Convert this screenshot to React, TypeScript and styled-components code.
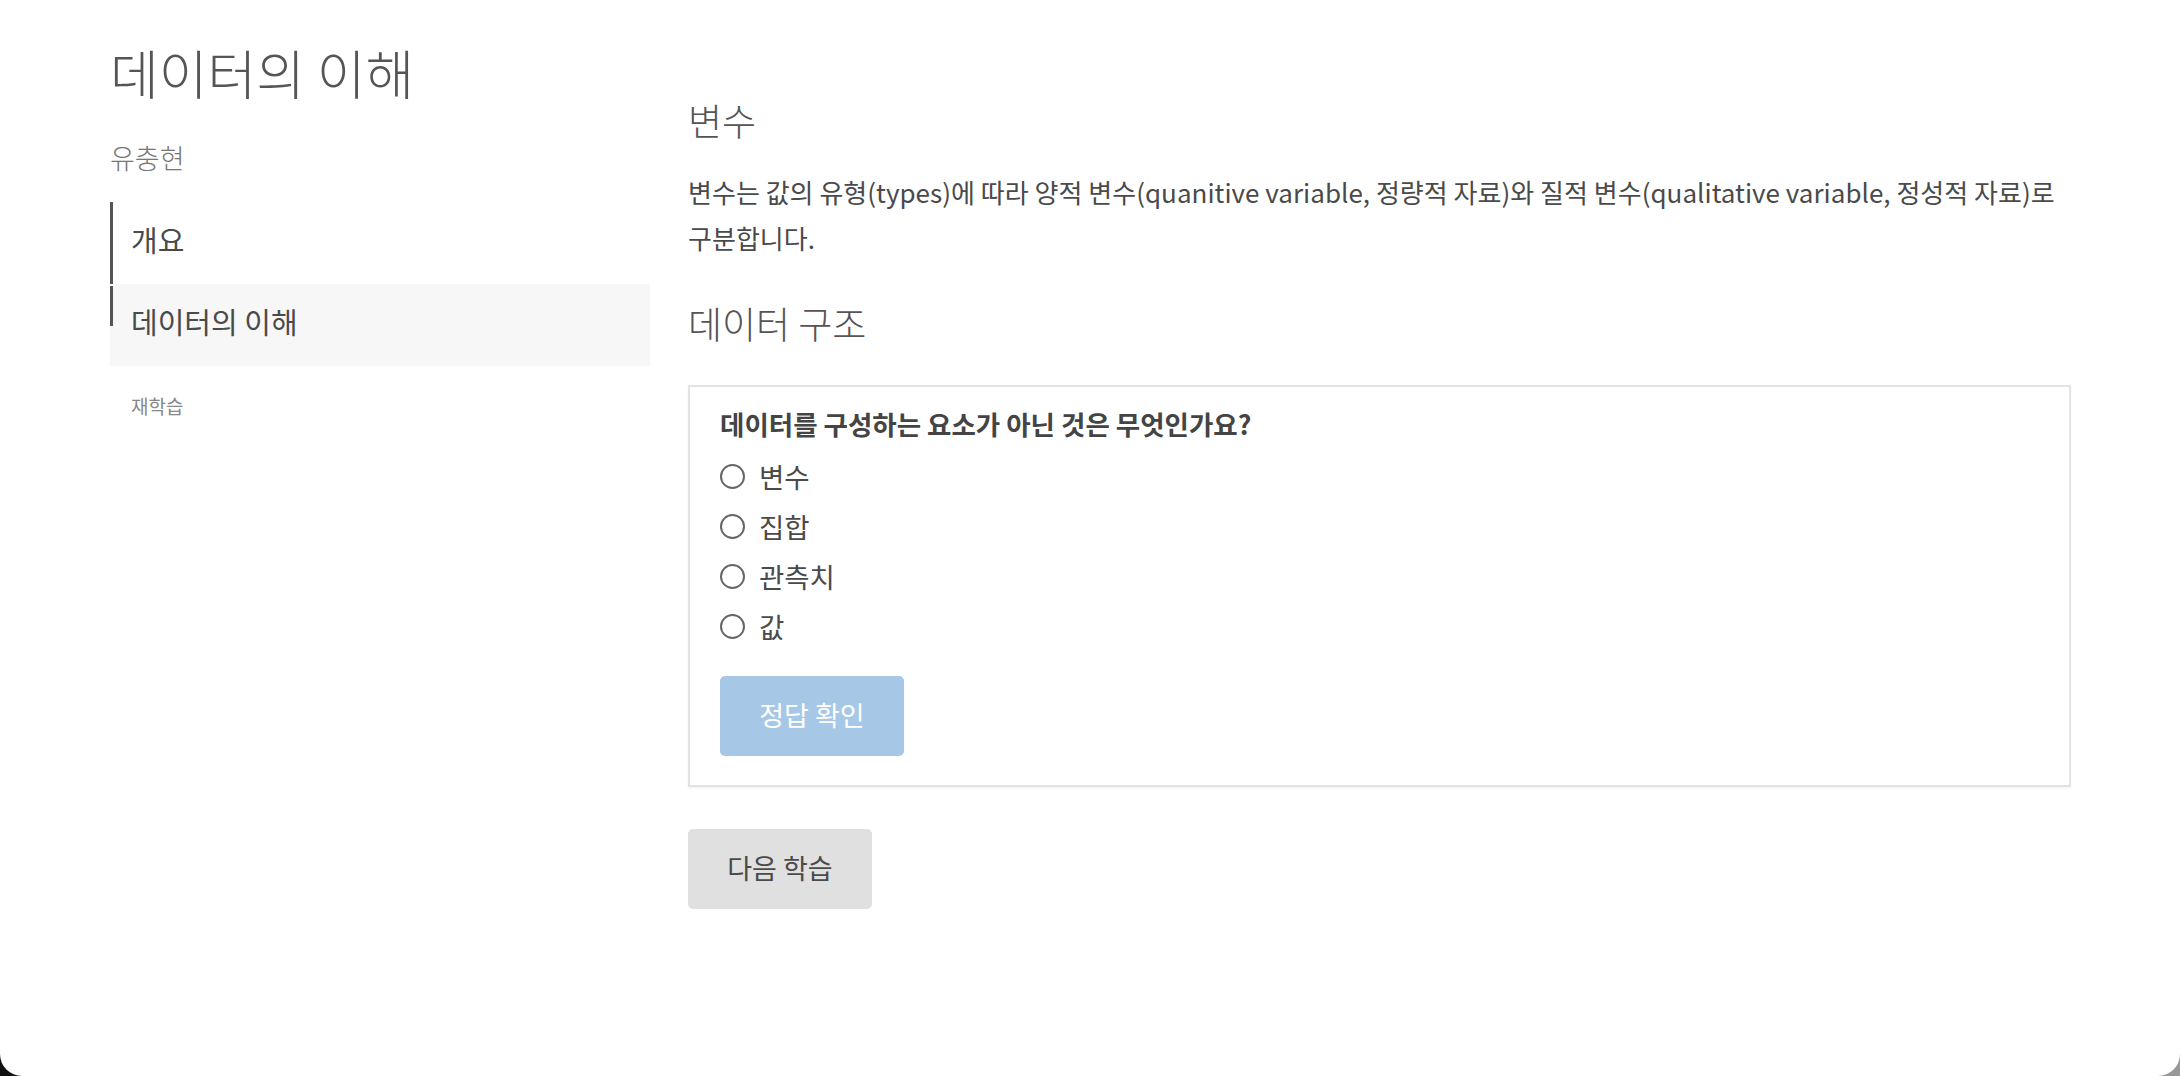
import React from "react";
import styled, { createGlobalStyle } from "styled-components";

const GlobalStyle = createGlobalStyle`
  html, body {
    margin: 0;
    padding: 0;
  }
  body {
    background: linear-gradient(to right, #111 0%, #555 60%, #999 100%);
    font-family: "Noto Sans CJK KR", "Noto Sans", sans-serif;
    color: #555;
  }
  * { box-sizing: border-box; }
`;

const Page = styled.div`
  width: 2180px;
  height: 1076px;
  background: #fff;
  border-radius: 0 0 22px 22px;
  overflow: hidden;
  display: grid;
  grid-template-columns: 540px 1fr;
  column-gap: 38px;
  padding: 0 109px 0 110px;
  word-break: keep-all;
`;

const Sidebar = styled.aside`
  display: flex;
  flex-direction: column;
  padding-top: 38px;
`;

const SiteTitle = styled.h1`
  margin: 0;
  font-size: 53px;
  line-height: 68px;
  font-weight: 300;
  color: #555;
`;

const Author = styled.div`
  margin-top: 36px;
  font-size: 27px;
  line-height: 32px;
  font-weight: 300;
  color: #777;
`;

const Nav = styled.nav`
  margin-top: 28px;
  display: flex;
  flex-direction: column;
`;

const NavItem = styled.a<{ $active?: boolean }>`
  position: relative;
  display: flex;
  align-items: center;
  height: 82px;
  padding: 0 0 8px 21px;
  font-size: 29px;
  line-height: 36px;
  color: #4a4a4a;
  text-decoration: none;
  background: ${(p) => (p.$active ? "#f7f7f7" : "transparent")};
`;

const NavBar = styled.span<{ $height: string; $top: string }>`
  position: absolute;
  left: 0;
  top: ${(p) => p.$top};
  width: 3px;
  height: ${(p) => p.$height};
  background: #555;
`;

const SubLink = styled.a`
  margin-top: 28px;
  padding-left: 21px;
  font-size: 19px;
  line-height: 24px;
  color: #888;
  text-decoration: none;
`;

const Main = styled.main`
  display: flex;
  flex-direction: column;
  align-items: flex-start;
  padding-top: 96px;
`;

const SectionTitle = styled.h2<{ $gap?: string }>`
  margin: ${(p) => p.$gap || "0"} 0 0 0;
  font-size: 37px;
  line-height: 48px;
  font-weight: 300;
  color: #555;
`;

const Paragraph = styled.p`
  margin: 25px 0 0 0;
  font-size: 26px;
  line-height: 46px;
  color: #4a4a4a;
  letter-spacing: 0.02px;
`;

const QuizBox = styled.section`
  margin-top: 38px;
  width: 100%;
  border: 2px solid #e3e3e3;
  box-shadow: 0 1px 2px rgba(0, 0, 0, 0.06);
  padding: 21px 30px 29px 30px;
  display: flex;
  flex-direction: column;
  align-items: flex-start;
`;

const Question = styled.div`
  font-size: 26.5px;
  line-height: 32px;
  font-weight: 700;
  color: #444;
  margin-bottom: 4px;
`;

const Option = styled.label`
  display: flex;
  align-items: center;
  gap: 14px;
  height: 36px;
  margin-top: 14px;
  font-size: 27.5px;
  color: #4a4a4a;
  cursor: pointer;
`;

const Radio = styled.input`
  appearance: none;
  -webkit-appearance: none;
  margin: 0;
  width: 25px;
  height: 25px;
  border-radius: 50%;
  border: 2px solid #666;
  background: #fff;
`;

const Button = styled.button<{ $variant: "primary" | "muted"; $gap: string }>`
  margin-top: ${(p) => p.$gap};
  width: 184px;
  height: 80px;
  border: none;
  border-radius: 5px;
  font-family: inherit;
  font-size: 27px;
  line-height: 1;
  padding: 0 0 4px 0;
  cursor: pointer;
  background: ${(p) => (p.$variant === "primary" ? "#a7c7e7" : "#e0e0e0")};
  color: ${(p) => (p.$variant === "primary" ? "#fff" : "#4a4a4a")};
`;

const options = ["변수", "집합", "관측치", "값"];

export default function App() {
  return (
    <>
      <GlobalStyle />
      <Page>
        <Sidebar>
          <SiteTitle>데이터의 이해</SiteTitle>
          <Author>유충현</Author>
          <Nav>
            <NavItem href="#">
              <NavBar $top="0" $height="100%" />
              개요
            </NavItem>
            <NavItem href="#" $active>
              <NavBar $top="2px" $height="40px" />
              데이터의 이해
            </NavItem>
          </Nav>
          <SubLink href="#">재학습</SubLink>
        </Sidebar>
        <Main>
          <SectionTitle>변수</SectionTitle>
          <Paragraph>
            변수는 값의 유형(types)에 따라 양적 변수(quanitive variable, 정량적 자료)와 질적
            변수(qualitative variable, 정성적 자료)로 구분합니다.
          </Paragraph>
          <SectionTitle $gap="38px">데이터 구조</SectionTitle>
          <QuizBox>
            <Question>데이터를 구성하는 요소가 아닌 것은 무엇인가요?</Question>
            {options.map((o) => (
              <Option key={o}>
                <Radio type="radio" name="quiz" value={o} />
                {o}
              </Option>
            ))}
            <Button $variant="primary" $gap="32px" disabled>
              정답 확인
            </Button>
          </QuizBox>
          <Button $variant="muted" $gap="42px">
            다음 학습
          </Button>
        </Main>
      </Page>
    </>
  );
}
